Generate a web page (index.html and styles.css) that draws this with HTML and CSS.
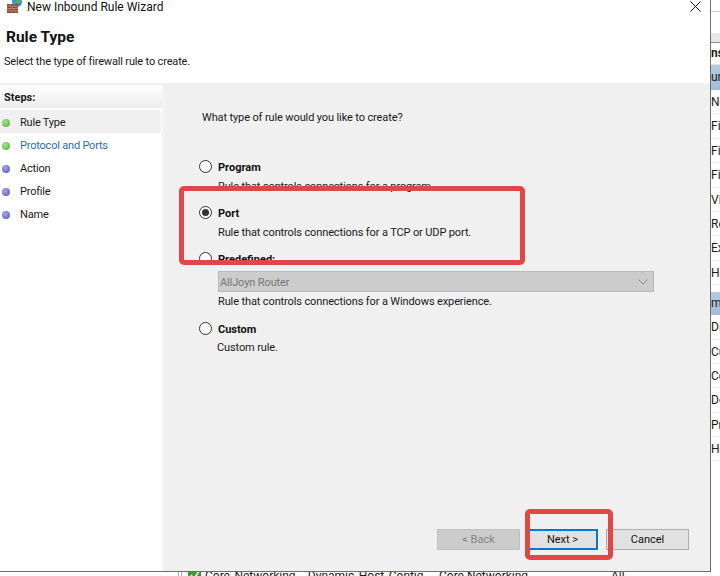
FILE: index.html
```html
<!DOCTYPE html>
<html lang="en">
<head>
<meta charset="utf-8">
<title>New Inbound Rule Wizard</title>
<link rel="stylesheet" href="styles.css">
</head>
<body>
<div class="desktop">
  <div class="behind-right">
    <div class="strip-rule"></div>
    <div class="strip-head">ns</div>
    <div class="strip-sel">ur</div>
    <div class="strip-row">Ne</div>
    <div class="strip-row">Fil</div>
    <div class="strip-row">Fil</div>
    <div class="strip-row">Fil</div>
    <div class="strip-row">Vi</div>
    <div class="strip-row">Re</div>
    <div class="strip-row">Ex</div>
    <div class="strip-row">He</div>
    <div class="strip-sel second">m</div>
    <div class="strip-row">Dis</div>
    <div class="strip-row">Cu</div>
    <div class="strip-row">Co</div>
    <div class="strip-row">De</div>
    <div class="strip-row">Pr</div>
    <div class="strip-row">He</div>
  </div>
  <div class="behind-bottom">
    <span class="tick"></span>
    <svg class="check" viewBox="0 0 13 10" width="13" height="10"><rect width="13" height="10" fill="#3f9a35"/><path d="M3 4l3 4 5-8" fill="none" stroke="#fff" stroke-width="1.5"/></svg>
    <span class="cell-name">Core Networking - Dynamic Host Config...</span>
    <span class="cell-group">Core Networking</span>
    <span class="cell-all">All</span>
  </div>

  <div class="window">
    <header class="head">
      <div class="titlebar">
        <svg class="app-icon" viewBox="0 0 16 13" width="16" height="13">
          <circle cx="11" cy="2" r="5" fill="#3a8fd0"/>
          <path d="M9 -1l5 0 1 3-4 2z" fill="#5cb04a"/>
          <rect x="1" y="4" width="11" height="9" fill="#8c4534"/>
          <path d="M1 6.200h11M1 8.500h11M1 10.800h11M4 4v2.200M8 4v2.200M6 6.200v2.300M10 6.200v2.300M4 8.500v2.300M8 8.500v2.300M6 10.800v2.200M10 10.800v2.200" stroke="#c59a86" stroke-width=".7" fill="none"/>
        </svg>
        <span class="title">New Inbound Rule Wizard</span>
        <svg class="close" viewBox="0 0 11 11" width="11" height="11"><path d="M.5.5l10 10M10.500.5l-10 10" stroke="#111" stroke-width="1" fill="none"/></svg>
      </div>
      <h1 class="page-title">Rule Type</h1>
      <p class="page-sub">Select the type of firewall rule to create.</p>
    </header>
    <div class="body">
      <nav class="steps">
        <div class="steps-head">Steps:</div>
        <ul class="step-list">
          <li class="step current"><span class="dot green"></span>Rule Type</li>
          <li class="step link"><span class="dot green"></span>Protocol and Ports</li>
          <li class="step"><span class="dot blue"></span>Action</li>
          <li class="step"><span class="dot blue"></span>Profile</li>
          <li class="step"><span class="dot blue"></span>Name</li>
        </ul>
      </nav>
      <main class="content">
        <p class="question">What type of rule would you like to create?</p>
        <div class="options">
          <div class="option">
            <div class="opt-head"><span class="radio"></span><b>Program</b></div>
            <div class="opt-desc">Rule that controls connections for a program.</div>
          </div>
          <div class="option">
            <div class="opt-head"><span class="radio checked"></span><b>Port</b></div>
            <div class="opt-desc">Rule that controls connections for a TCP or UDP port.</div>
          </div>
          <div class="option">
            <div class="opt-head"><span class="radio"></span><b>Predefined:</b></div>
            <div class="combo"><span>AllJoyn Router</span>
              <svg class="chev" viewBox="0 0 10 6" width="10" height="6"><path d="M.5.5L5 5 9.500.5" fill="none" stroke="#8a8a8a"/></svg>
            </div>
            <div class="opt-desc tight">Rule that controls connections for a Windows experience.</div>
          </div>
          <div class="option nudged">
            <div class="opt-head"><span class="radio"></span><b>Custom</b></div>
            <div class="opt-desc">Custom rule.</div>
          </div>
        </div>
        <div class="buttons">
          <button class="btn disabled" type="button">&lt; Back</button>
          <button class="btn primary" type="button">Next &gt;</button>
          <button class="btn" type="button">Cancel</button>
        </div>
      </main>
    </div>
  </div>

  <div class="mark mark-port"></div>
  <div class="mark mark-next"></div>
</div>
</body>
</html>
```
FILE: styles.css
```css
* { box-sizing: border-box; }
html, body { margin: 0; padding: 0; background: #fff; }
body { font-family: Roboto, "Open Sans", sans-serif; font-size: 11px; letter-spacing: -0.12px; color: #1a1a1a; }
.desktop { position: relative; width: 720px; height: 576px; overflow: hidden; background: #fff; }

.behind-right { position: absolute; left: 711px; top: 0; width: 9px; height: 576px; overflow: hidden; display: flex; flex-direction: column; font-size: 12px; letter-spacing: 0; }
.strip-rule { flex: none; height: 32px; border-top: 1px solid #ccc; margin-top: 11px; background: linear-gradient(#fff 70%, #e8e8e8 70%); border-bottom: 1.500px solid #8e8e8e; }
.strip-head { flex: none; height: 22px; line-height: 21px; font-weight: 700; border-bottom: 1px solid #e3e3e3; white-space: nowrap; }
.strip-sel { flex: none; height: 25px; line-height: 25px; background: linear-gradient(#b5cbe3, #a3bcd8); }
.strip-sel.second { height: 23px; line-height: 23px; margin-top: 7px; }
.strip-row { flex: none; height: 24.400px; line-height: 24.400px; border-bottom: 1px solid #f0f0f0; white-space: nowrap; }

.behind-bottom { position: absolute; left: 178px; top: 568px; height: 16px; width: 470px; display: flex; align-items: flex-start; font-size: 12px; line-height: 16px; letter-spacing: 0; white-space: nowrap; }
.tick { width: 4px; height: 8px; margin-top: 3px; border: 1px solid #aaa; }
.check { margin: 3px 0 0 6px; flex: none; }
.cell-name { width: 234px; margin-left: 4px; word-spacing: 1.500px; }
.cell-group { width: 172px; }

.window { position: absolute; left: 0; top: 0; width: 711px; height: 572px; background: #fff; border-right: 1.500px solid #6e6e6e; border-bottom: 1.500px solid #6e6e6e; display: flex; flex-direction: column; }

.head { flex: none; height: 85px; border-bottom: 2px solid #f0f0f0; }
.titlebar { display: flex; align-items: center; height: 12px; }
.app-icon { flex: none; margin: 1px 0 0 6px; }
.title { margin-left: 5px; padding-top: 2px; font-size: 12px; letter-spacing: 0; color: #111; }
.close { margin-left: auto; margin-right: 9px; }
.page-title { margin: 14px 0 0 6px; font-size: 15.500px; line-height: 22px; font-weight: 700; letter-spacing: 0; color: #111; }
.page-sub { margin: 6px 0 0 4px; font-size: 11px; line-height: 16px; letter-spacing: -0.16px; }

.body { flex: 1; display: flex; min-height: 0; }

.steps { flex: none; width: 165px; border-right: 3px solid #f3f3f3; }
.steps-head { height: 23px; line-height: 25px; padding-left: 4px; font-weight: 700; font-size: 11px; letter-spacing: 0; background: linear-gradient(#fff, #ececec); }
.step-list { list-style: none; margin: 2px 0 0; padding: 0; }
.step { height: 23px; display: flex; align-items: center; padding-top: 2px; padding-left: 2px; margin-right: 1px; font-size: 11px; letter-spacing: -0.2px; }
.step.current { background: #f0f0f0; }
.step.link { color: #1f6fb5; }
.dot { width: 8px; height: 8px; border-radius: 50%; margin-right: 10px; flex: none; }
.dot.green { background: radial-gradient(circle at 40% 35%, #a8e08a, #4caf3a); }
.dot.blue { background: radial-gradient(circle at 40% 35%, #a5a5e8, #5353b8); }

.content { flex: 1; background: #f0f0f0; padding: 22px 21px 21px 37px; display: flex; flex-direction: column; min-width: 0; }
.question { margin: 0 0 -2px; line-height: 22px; font-size: 11px; }
.options { display: flex; flex-direction: column; gap: 6px; margin-top: 29px; margin-left: -3px; }
.opt-head { display: flex; align-items: center; height: 20px; }
.opt-head b { font-size: 11px; padding-top: 2px; font-weight: 700; letter-spacing: 0; color: #111; }
.radio { flex: none; width: 13px; height: 13px; margin-right: 6px; border: 1px solid #333; border-radius: 50%; background: #fff; display: flex; align-items: center; justify-content: center; }
.radio.checked::after { content: ""; width: 7px; height: 7px; border-radius: 50%; background: #333; }
.opt-desc { line-height: 22px; margin-bottom: -2px; padding-left: 19px; font-size: 11px; }
.opt-desc.tight { margin-top: -1px; }
.combo { margin: 3px 0 0 19px; width: 436px; height: 21px; background: #cccccc; border: 1px solid #b9b9b9; display: flex; align-items: center; justify-content: space-between; padding: 2px 5px 0 1px; color: #777; font-size: 11px; }
.chev { margin-top: -2px; }
.nudged { margin-top: 1px; }
.nudged .opt-desc { padding-left: 18px; margin-top: -1px; }

.buttons { margin-top: auto; display: flex; gap: 8px; justify-content: flex-end; align-items: center; }
.btn { font: inherit; font-size: 11px; width: 83px; height: 21px; padding: 0; background: #e1e1e1; border: 1px solid #adadad; color: #111; }
.btn.disabled { background: #cccccc; border-color: #bfbfbf; color: #838383; }
.btn.primary { width: 71px; border: 2px solid #0078d7; margin-left: -1px; }

.mark { position: absolute; border: 5px solid #e04848; border-radius: 5px; }
.mark-port { left: 179px; top: 186px; width: 346px; height: 79px; }
.mark-next { left: 525px; top: 509px; width: 88px; height: 51px; }
```
